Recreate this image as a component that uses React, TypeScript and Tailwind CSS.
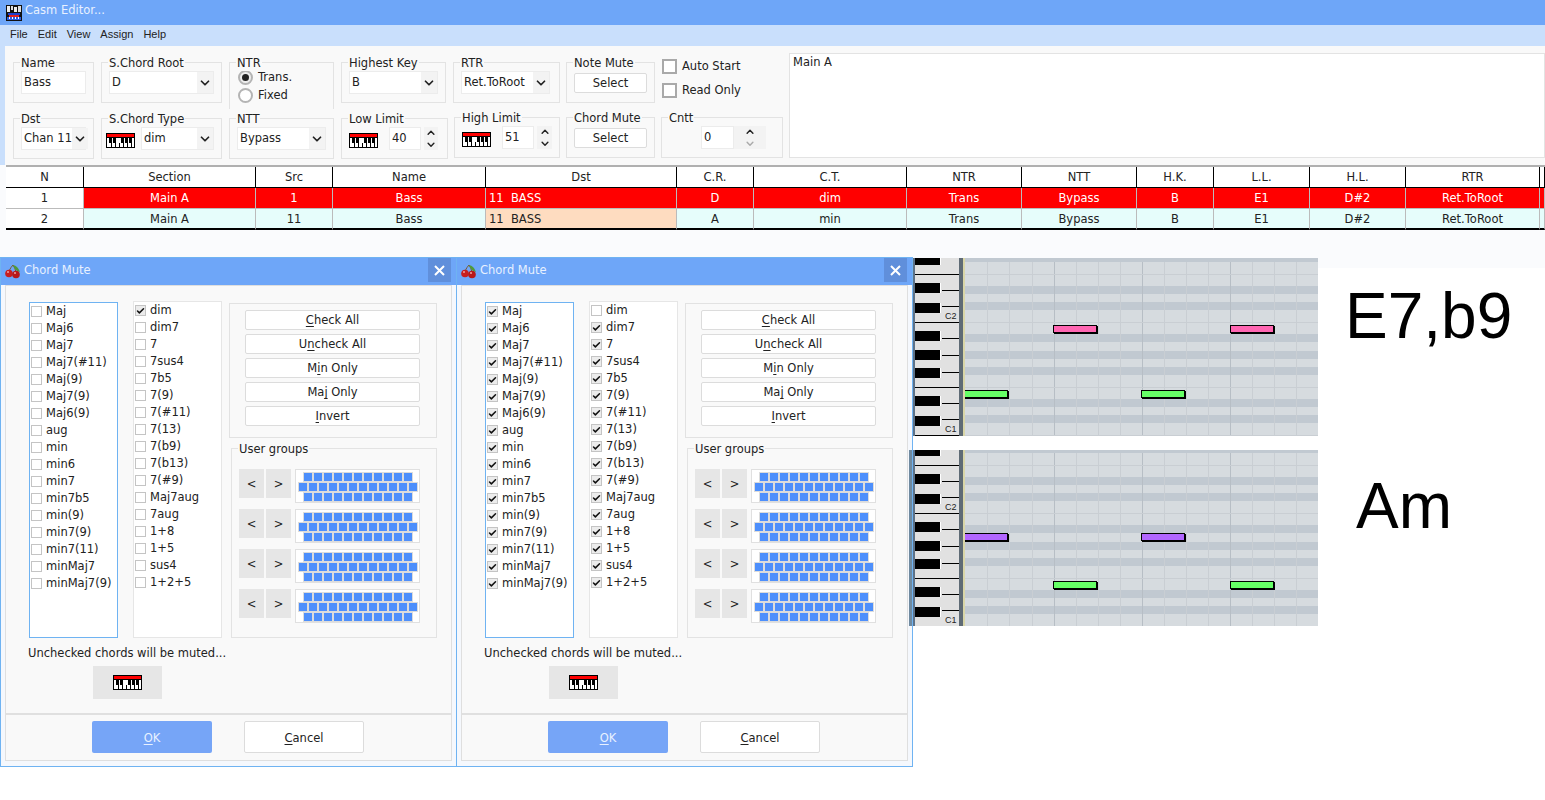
import { ReactNode } from "react"
import { Check, ChevronDown, ChevronUp } from "lucide-react"

const columns = [
  { head: "N", one: "1", two: "2" },
  { head: "Section", one: "Main A", two: "Main A" },
  { head: "Src", one: "1", two: "11" },
  { head: "Name", one: "Bass", two: "Bass" },
  { head: "Dst", one: "11  BASS", two: "11  BASS" },
  { head: "C.R.", one: "D", two: "A" },
  { head: "C.T.", one: "dim", two: "min" },
  { head: "NTR", one: "Trans", two: "Trans" },
  { head: "NTT", one: "Bypass", two: "Bypass" },
  { head: "H.K.", one: "B", two: "B" },
  { head: "L.L.", one: "E1", two: "E1" },
  { head: "H.L.", one: "D#2", two: "D#2" },
  { head: "RTR", one: "Ret.ToRoot", two: "Ret.ToRoot" },
  { head: "", one: "", two: "" },
]

const chordsLeft = ["Maj", "Maj6", "Maj7", "Maj7(#11)", "Maj(9)", "Maj7(9)", "Maj6(9)", "aug", "min", "min6", "min7", "min7b5", "min(9)", "min7(9)", "min7(11)", "minMaj7", "minMaj7(9)"]
const chordsRight = ["dim", "dim7", "7", "7sus4", "7b5", "7(9)", "7(#11)", "7(13)", "7(b9)", "7(b13)", "7(#9)", "Maj7aug", "7aug", "1+8", "1+5", "sus4", "1+2+5"]

function Group({ label, className, children }: { label: string; className: string; children?: ReactNode }) {
  return (
    <div className={`relative shrink-0 border border-[#e3e3e3] ${className}`}>
      <span className="absolute left-[6px] top-[-8px] bg-[#f9f9f9] px-px leading-[16px] whitespace-nowrap">{label}</span>
      {children}
    </div>
  )
}

function Select({ value, className }: { value: string; className: string }) {
  return (
    <div className={`flex h-[23px] items-center justify-between border border-[#ececec] bg-white pl-[2px] ${className}`}>
      <span className="whitespace-nowrap pb-[2px]">{value}</span>
      <span className="flex h-full w-[16px] shrink-0 items-center justify-center bg-[#f3f3f3]">
        <ChevronDown size={14} strokeWidth={3} color="#222" />
      </span>
    </div>
  )
}

function Spinner({ disabledDown }: { disabledDown?: boolean }) {
  return (
    <div className="flex h-[23px] w-full flex-col items-center justify-between bg-[#f3f3f3]">
      <ChevronUp size={12} strokeWidth={3} color="#222" />
      <ChevronDown size={12} strokeWidth={3} color={disabledDown ? "#aaa" : "#222"} />
    </div>
  )
}

function PianoIcon() {
  return (
    <svg width="29" height="15" viewBox="0 0 29 15" shapeRendering="crispEdges" className="shrink-0">
      <rect width="29" height="15" fill="#000" />
      <rect x="1" y="1" width="27" height="3" fill="#f00" />
      <rect x="1" y="5" width="27" height="9" fill="#fff" />
      {[3, 7, 15, 19, 23].map((x) => (
        <rect key={x} x={x} y="5" width="3" height="5" fill="#000" />
      ))}
      {[5, 9, 13, 17, 21, 25].map((x) => (
        <rect key={x} x={x} y="10" width="1" height="4" fill="#000" />
      ))}
    </svg>
  )
}

function Logo() {
  return (
    <svg width="16" height="16" viewBox="0 0 16 16" shapeRendering="crispEdges" className="shrink-0">
      <rect width="16" height="16" fill="#111" />
      <rect x="1" y="1" width="3" height="6" fill="#eee" />
      <rect x="5" y="1" width="2" height="4" fill="#ddd" />
      <rect x="8" y="2" width="3" height="5" fill="#eee" />
      <rect x="12" y="1" width="3" height="6" fill="#ddd" />
      <rect x="2" y="8" width="12" height="2" fill="#1d3fcf" />
      <rect x="3" y="10" width="10" height="2" fill="#e02020" />
      <rect x="1" y="12" width="14" height="3" fill="#2b5be0" />
      <rect x="3" y="12" width="1" height="2" fill="#fff" />
      <rect x="6" y="12" width="1" height="2" fill="#fff" />
      <rect x="9" y="12" width="1" height="2" fill="#fff" />
      <rect x="12" y="12" width="1" height="2" fill="#fff" />
    </svg>
  )
}

function Cherry() {
  return (
    <svg width="16" height="15" viewBox="0 0 16 15" className="shrink-0">
      <path d="M4 7 Q6 3 8 1 Q10 4 11 8" fill="none" stroke="#7a5a30" strokeWidth="1" />
      <path d="M8 1 Q13 2 15 8 Q10 7 8 1Z" fill="#4f9a3a" />
      <circle cx="4" cy="9.5" r="3.8" fill="#c81e1e" />
      <circle cx="11" cy="10.5" r="3.8" fill="#b81818" />
      <circle cx="3" cy="8" r="1" fill="#f2a0a0" />
      <circle cx="10" cy="9" r="1" fill="#f2a0a0" />
    </svg>
  )
}

function MainWindow() {
  return (
    <div className="h-[268px] overflow-hidden bg-[#fafbfd]">
      <div className="flex h-[25px] items-center gap-[3px] bg-[#6ea6f8] pl-[6px] text-white">
        <Logo />
        <span className="pb-[6px] text-[#e8f1ff]">Casm Editor...</span>
      </div>
      <div className="flex h-[21px] items-center gap-[10px] bg-[#c9dffc] pb-[3px] pl-[10px] font-['Liberation_Sans',sans-serif]">
        {["File", "Edit", "View", "Assign", "Help"].map((m) => (
          <span key={m} className="text-[11px]">{m}</span>
        ))}
      </div>
      <div className="flex h-[119px] border-l-[5px] border-[#c9dffc] bg-[#f9f9f9] pl-[8px]">
        <div className="w-[776px] shrink-0 pt-[16px]">
          <div className="flex h-[55px] items-start">
            <Group label="Name" className="mr-[7px] h-[41px] w-[81px] px-[7px] pt-[8px]">
              <div className="flex h-[23px] items-center border border-[#ececec] bg-white pb-[2px] pl-[2px]">Bass</div>
            </Group>
            <Group label="S.Chord Root" className="mr-[7px] h-[41px] w-[121px] px-[7px] pt-[8px]">
              <Select value="D" className="w-full" />
            </Group>
            <Group label="NTR" className="mr-[7px] h-[47px] w-[105px] border-b-0 pl-[8px] pt-[5px]">
              <div className="flex h-[18px] items-center gap-[5px]">
                <span className="flex h-[15px] w-[15px] items-center justify-center rounded-full border-2 border-[#b4b4b4] bg-[#eee]">
                  <span className="h-[7px] w-[7px] rounded-full bg-[#222]" />
                </span>
                Trans.
              </div>
              <div className="flex h-[18px] items-center gap-[5px]">
                <span className="h-[15px] w-[15px] rounded-full border-2 border-[#b4b4b4] bg-white" />
                Fixed
              </div>
            </Group>
            <Group label="Highest Key" className="mr-[7px] h-[41px] w-[105px] px-[7px] pt-[8px]">
              <Select value="B" className="w-full" />
            </Group>
            <Group label="RTR" className="mr-[6px] h-[41px] w-[107px] pl-[7px] pr-[9px] pt-[8px]">
              <Select value="Ret.ToRoot" className="w-full" />
            </Group>
            <Group label="Note Mute" className="mr-[7px] h-[41px] w-[89px] px-[7px] pt-[10px]">
              <button className="h-[20px] w-full rounded-[2px] border border-[#dcdcdc] bg-white">Select</button>
            </Group>
            <div className="-mt-[3px] flex flex-col gap-[9px]">
              <label className="flex h-[15px] items-center gap-[5px] whitespace-nowrap">
                <span className="h-[15px] w-[15px] border-2 border-[#a9a9a9] bg-white" />
                <span className="pb-[2px]">Auto Start</span>
              </label>
              <label className="flex h-[15px] items-center gap-[5px] whitespace-nowrap">
                <span className="h-[15px] w-[15px] border-2 border-[#a9a9a9] bg-white" />
                <span className="pb-[2px]">Read Only</span>
              </label>
            </div>
          </div>
          <div className="flex items-start">
            <Group label="Dst" className="mr-[7px] mt-px h-[41px] w-[81px] px-[7px] pt-[8px]">
              <Select value="Chan 11" className="w-full" />
            </Group>
            <Group label="S.Chord Type" className="mr-[7px] mt-px flex h-[41px] w-[121px] gap-[6px] pl-[4px] pr-[7px] pt-[8px]">
              <span className="pt-[6px]"><PianoIcon /></span>
              <Select value="dim" className="flex-1" />
            </Group>
            <Group label="NTT" className="mr-[7px] mt-px h-[41px] w-[105px] px-[7px] pt-[8px]">
              <Select value="Bypass" className="w-full" />
            </Group>
            <Group label="Low Limit" className="mr-[6px] mt-px flex h-[41px] w-[107px] pl-[7px] pt-[8px]">
              <span className="pt-[6px]"><PianoIcon /></span>
              <div className="ml-[11px] flex h-[23px] w-[32px] items-center border border-[#ececec] bg-white pb-[2px] pl-[2px]">40</div>
              <div className="ml-[3px] w-[14px]"><Spinner /></div>
            </Group>
            <Group label="High Limit" className="mr-[6px] h-[41px] w-[106px] pl-[7px] pt-[8px]">
              <span className="absolute left-[7px] top-[14px]"><PianoIcon /></span>
              <div className="ml-[40px] flex h-[23px] w-[32px] items-center border border-[#ececec] bg-white pb-[2px] pl-[2px]">51</div>
              <div className="absolute left-[82px] top-[8px] w-[15px]"><Spinner /></div>
            </Group>
            <Group label="Chord Mute" className="mr-[6px] h-[41px] w-[89px] px-[7px] pt-[10px]">
              <button className="h-[20px] w-full rounded-[2px] border border-[#dcdcdc] bg-white">Select</button>
            </Group>
            <Group label="Cntt" className="flex h-[41px] w-[122px] pl-[39px] pt-[8px]">
              <div className="flex h-[23px] w-[33px] items-center border border-[#ececec] bg-white pb-[2px] pl-[2px]">0</div>
              <div className="w-[32px]"><Spinner disabledDown /></div>
            </Group>
          </div>
        </div>
        <div className="mt-[7px] h-[105px] flex-1 border border-[#e3e3e3] bg-white pl-[3px] leading-[16px]">Main A</div>
      </div>
      <div className="ml-[6px] border-t-2 border-[#b0b0b0]">
        <div className="grid grid-cols-[78px_172px_77px_153px_191px_77px_153px_115px_115px_77px_96px_96px_134px_1fr]">
          {columns.map((c) => (
            <div key={c.head} className="flex h-[21px] items-center justify-center border-r border-b border-black bg-white">{c.head}</div>
          ))}
          {columns.map((c, i) => (
            <div
              key={c.head}
              className={`flex h-[21px] items-center whitespace-pre border-r border-b border-[#bbb] ${i === 0 ? "justify-center bg-white text-[#222]" : "bg-[#f00] text-white"} ${i === 4 ? "justify-start pl-[3px]" : "justify-center"}`}
            >
              {c.one}
            </div>
          ))}
          {columns.map((c, i) => (
            <div
              key={c.head}
              className={`flex h-[21px] items-center whitespace-pre border-r border-b-2 border-r-[#bbb] border-b-black ${i === 0 ? "justify-center bg-white" : i === 4 ? "justify-start bg-[#fedcc0] pl-[3px]" : "justify-center bg-[#e6fdfb]"}`}
            >
              {c.two}
            </div>
          ))}
        </div>
      </div>
    </div>
  )
}

function ChordList({ items, inverted, className }: { items: string[]; inverted: (name: string) => boolean; className: string }) {
  return (
    <div className={`w-[89px] shrink-0 border bg-white pl-px ${className}`}>
      {items.map((name) => (
        <div key={name} className="flex h-[17px] items-center gap-[4px] whitespace-nowrap">
          <span className={`flex h-[11px] w-[11px] shrink-0 items-center justify-center border border-[#c4c4c4] ${inverted(name) ? "bg-[#ececec]" : "bg-white"}`}>
            {inverted(name) && <Check size={10} strokeWidth={4} color="#111" />}
          </span>
          <span className="pb-[2px]">{name}</span>
        </div>
      ))}
    </div>
  )
}

function Mnemonic({ before, mark, after }: { before?: string; mark: string; after?: string }) {
  return (
    <>
      {before}
      <span className="underline underline-offset-2">{mark}</span>
      {after}
    </>
  )
}

function KeyPattern() {
  return (
    <div className="flex h-[34px] w-[125px] flex-col items-center border border-[#e0e0e0] bg-white pt-[2px]">
      {[11, 12, 11].map((count, row) => (
        <div key={row} className="flex h-[10px] gap-[2px] bg-[#dcdcdc] px-px py-px">
          {Array.from({ length: count }).map((_, i) => (
            <span key={i} className="h-[8px] w-[8px] bg-[#4d8ffc]" />
          ))}
        </div>
      ))}
    </div>
  )
}

function ChordDialog({ className, isOn }: { className: string; isOn: (name: string) => boolean }) {
  return (
    <div className={`absolute top-[257px] flex h-[510px] w-[457px] flex-col border border-[#6fb3f2] bg-[#f5f8fd] ${className}`}>
      <div className="relative flex h-[27px] shrink-0 items-center gap-[3px] bg-[#6ea6f8] pl-[4px] text-[#e8f1ff]">
        <Cherry />
        <span className="pb-[4px]">Chord Mute</span>
        <span className="absolute right-[5px] top-0 flex h-[24px] w-[23px] items-center justify-center bg-[#608fdb]">
          <svg width="11" height="11" viewBox="0 0 11 11">
            <path d="M1 1 L10 10 M10 1 L1 10" stroke="#fff" strokeWidth="2" />
          </svg>
        </span>
      </div>
      <div className="mx-[4px] mb-[5px] flex flex-1 flex-col border border-[#dfdfdf] bg-[#f9f9f9]">
        <div className="h-[427px] pl-[23px]">
          <div className="flex items-start pt-[15px]">
            <ChordList items={chordsLeft} inverted={isOn} className="mt-px h-[336px] border-[#6fb3f2]" />
            <ChordList items={chordsRight} inverted={isOn} className="ml-[15px] h-[337px] border-[#e6e6e6]" />
            <div className="ml-[7px] w-[208px] shrink-0">
              <div className="mt-[2px] flex h-[135px] flex-col gap-[4px] border border-[#e2e2e2] pl-[15px] pt-[6px]">
                {[
                  <Mnemonic key="a" mark="C" after="heck All" />,
                  <Mnemonic key="b" before="U" mark="n" after="check All" />,
                  <Mnemonic key="c" before="M" mark="i" after="n Only" />,
                  <Mnemonic key="d" before="Ma" mark="j" after=" Only" />,
                  <Mnemonic key="e" mark="I" after="nvert" />,
                ].map((label, i) => (
                  <button key={i} className="h-[20px] w-[175px] rounded-[2px] border border-[#dcdcdc] bg-white">{label}</button>
                ))}
              </div>
              <Group label="User groups" className="ml-[2px] mt-[10px] h-[190px] w-[206px] pl-[7px] pt-[20px]">
                <div className="flex flex-col gap-[6px]">
                  {[0, 1, 2, 3].map((row) => (
                    <div key={row} className="flex items-start">
                      <span className="flex h-[29px] w-[25px] items-center justify-center bg-[#e6e6e6]">&lt;</span>
                      <span className="ml-[2px] flex h-[29px] w-[25px] items-center justify-center bg-[#e6e6e6]">&gt;</span>
                      <span className="ml-[4px]"><KeyPattern /></span>
                    </div>
                  ))}
                </div>
              </Group>
            </div>
          </div>
          <div className="-ml-px mt-[7px] h-[16px] whitespace-nowrap">Unchecked chords will be muted...</div>
          <div className="ml-[64px] mt-[5px] flex h-[33px] w-[69px] items-center justify-center bg-[#e6e6e6]">
            <PianoIcon />
          </div>
        </div>
        <div className="flex flex-1 gap-[32px] border-t-2 border-[#e0e0e0] pl-[86px] pt-[6px]">
          <button className="h-[32px] w-[120px] rounded-[2px] bg-[#76a5f7] pt-[2px] text-[#e8f1ff]">
            <Mnemonic mark="O" after="K" />
          </button>
          <button className="h-[32px] w-[120px] rounded-[2px] border border-[#dcdcdc] bg-white pt-[2px]">
            <Mnemonic mark="C" after="ancel" />
          </button>
        </div>
      </div>
    </div>
  )
}

type Note = { x: number; y: number; color: string }

function PianoRoll({ className, notes, viewY, height }: { className: string; notes: Note[]; viewY: number; height: number }) {
  const bands = [28, 44, 76, 93, 109, 141, 157]
  const rowLines = [16, 64, 129, 177]
  const beats = [22, 44, 67, 89, 111, 133, 155, 177, 199, 221, 243, 265, 287, 309, 331]
  const blackKeys = [
    [0, 7], [25, 10], [45, 10], [73, 10], [92, 10], [110, 10], [138, 10], [158, 10],
  ]
  const keyLines = [32, 48, 80, 97, 114, 145, 161]
  return (
    <svg width="406" height={height} viewBox={`0 ${viewY} 406 ${height}`} shapeRendering="crispEdges" className={`absolute ${className}`}>
      <rect x="0" y="0" width="406" height="178" fill="#d6dbdf" />
      <rect x="53" y="0" width="353" height="4" fill="#c1c9d1" />
      {bands.map((y) => (
        <rect key={y} x="53" y={y} width="353" height="8" fill="#c1c9d1" />
      ))}
      {beats.map((x, i) => (
        <rect key={x} x={53 + x} y="4" width="1" height="174" fill={(i + 1) % 4 === 0 ? "#b7bec5" : "#c9ced3"} />
      ))}
      {rowLines.map((y) => (
        <rect key={y} x="53" y={y} width="353" height="1" fill="#c9ced3" />
      ))}
      {notes.map((n) => (
        <g key={`${n.x}-${n.y}`}>
          <rect x={n.x + 1} y={n.y + 1} width="44" height="8" fill="#000" />
          <rect x={n.x} y={n.y} width="44" height="8" fill="#000" />
          <rect x={n.x + 1} y={n.y + 1} width="42" height="6" fill={n.color} />
        </g>
      ))}
      <rect x="0" y="0" width="3" height="178" fill="#5d7288" />
      <rect x="3" y="0" width="44" height="178" fill="#e1e1e1" />
      <rect x="47" y="0" width="4" height="178" fill="#5f6b75" />
      <rect x="51" y="0" width="2" height="178" fill="#d9d6a8" />
      {rowLines.map((y) => (
        <rect key={y} x="3" y={y} width="44" height="1" fill="#000" />
      ))}
      {keyLines.map((y) => (
        <rect key={y} x="30" y={y} width="17" height="1" fill="#000" />
      ))}
      {blackKeys.map(([y, h]) => (
        <g key={y}>
          <rect x="3" y={y} width="25" height={h} fill="#000" />
          <rect x="28" y={y} width="1" height={h} fill="#fff" />
        </g>
      ))}
      <text x="33" y="61" fontSize="9" fill="#222" fontFamily="'Liberation Sans', sans-serif">C2</text>
      <text x="33" y="174" fontSize="9" fill="#222" fontFamily="'Liberation Sans', sans-serif">C1</text>
    </svg>
  )
}

export default function App() {
  return (
    <div className="relative h-[800px] overflow-hidden bg-white font-['DejaVu_Sans',sans-serif] text-[11.5px] leading-[16px] text-[#222]">
      <MainWindow />
      <PianoRoll
        className="left-[912px] top-[258px]"
        viewY={0}
        height={178}
        notes={[
          { x: 52, y: 132, color: "#66ff66" },
          { x: 229, y: 132, color: "#66ff66" },
          { x: 141, y: 67, color: "#ff66b2" },
          { x: 318, y: 67, color: "#ff66b2" },
        ]}
      />
      <PianoRoll
        className="left-[912px] top-[450px]"
        viewY={1}
        height={176}
        notes={[
          { x: 52, y: 84, color: "#b266ff" },
          { x: 229, y: 84, color: "#b266ff" },
          { x: 141, y: 132, color: "#66ff66" },
          { x: 318, y: 132, color: "#66ff66" },
        ]}
      />
      <ChordDialog className="left-0" isOn={(name) => name === "dim"} />
      <ChordDialog className="left-[456px]" isOn={(name) => name !== "dim"} />
      <span className="absolute left-[909px] top-[450px] h-[176px] w-[3px] bg-[#6f8aa0]" />
      <span className="absolute left-[1345px] top-[280px] font-['Liberation_Sans',sans-serif] text-[64px] leading-[72px] text-black">E7,b9</span>
      <span className="absolute left-[1356px] top-[470px] font-['Liberation_Sans',sans-serif] text-[64px] leading-[72px] text-black">Am</span>
    </div>
  )
}
